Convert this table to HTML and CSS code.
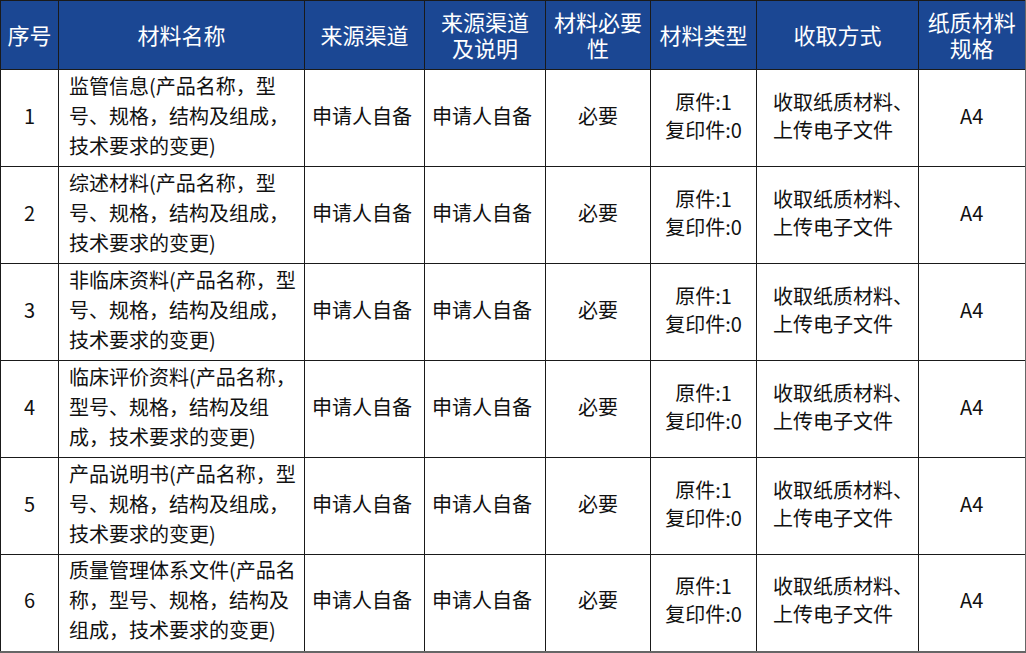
FILE: index.html
```html
<!DOCTYPE html>
<html lang="zh-CN">
<head>
<meta charset="utf-8">
<title>材料清单</title>
<link rel="stylesheet" href="styles.css">
</head>
<body>
<table class="materials">
  <colgroup>
    <col class="c-no"><col class="c-name"><col class="c-src"><col class="c-srcdesc"><col class="c-need"><col class="c-type"><col class="c-way"><col class="c-spec">
  </colgroup>
  <thead>
    <tr>
      <th>序号</th>
      <th>材料名称</th>
      <th>来源渠道</th>
      <th class="two">来源渠道<br>及说明</th>
      <th class="two">材料必要<br>性</th>
      <th>材料类型</th>
      <th>收取方式</th>
      <th class="two">纸质材料<br>规格</th>
    </tr>
  </thead>
  <tbody>
    <tr>
      <td class="no">1</td>
      <td class="name">监管信息(产品名称，型<br>号、规格，结构及组成，<br>技术要求的变更)</td>
      <td class="src">申请人自备</td>
      <td class="src">申请人自备</td>
      <td class="center">必要</td>
      <td class="center">原件:1<br>复印件:0</td>
      <td class="way">收取纸质材料、<br>上传电子文件</td>
      <td class="center">A4</td>
    </tr>
    <tr>
      <td class="no">2</td>
      <td class="name">综述材料(产品名称，型<br>号、规格，结构及组成，<br>技术要求的变更)</td>
      <td class="src">申请人自备</td>
      <td class="src">申请人自备</td>
      <td class="center">必要</td>
      <td class="center">原件:1<br>复印件:0</td>
      <td class="way">收取纸质材料、<br>上传电子文件</td>
      <td class="center">A4</td>
    </tr>
    <tr>
      <td class="no">3</td>
      <td class="name">非临床资料(产品名称，型<br>号、规格，结构及组成，<br>技术要求的变更)</td>
      <td class="src">申请人自备</td>
      <td class="src">申请人自备</td>
      <td class="center">必要</td>
      <td class="center">原件:1<br>复印件:0</td>
      <td class="way">收取纸质材料、<br>上传电子文件</td>
      <td class="center">A4</td>
    </tr>
    <tr>
      <td class="no">4</td>
      <td class="name">临床评价资料(产品名称，<br>型号、规格，结构及组<br>成，技术要求的变更)</td>
      <td class="src">申请人自备</td>
      <td class="src">申请人自备</td>
      <td class="center">必要</td>
      <td class="center">原件:1<br>复印件:0</td>
      <td class="way">收取纸质材料、<br>上传电子文件</td>
      <td class="center">A4</td>
    </tr>
    <tr>
      <td class="no">5</td>
      <td class="name">产品说明书(产品名称，型<br>号、规格，结构及组成，<br>技术要求的变更)</td>
      <td class="src">申请人自备</td>
      <td class="src">申请人自备</td>
      <td class="center">必要</td>
      <td class="center">原件:1<br>复印件:0</td>
      <td class="way">收取纸质材料、<br>上传电子文件</td>
      <td class="center">A4</td>
    </tr>
    <tr>
      <td class="no">6</td>
      <td class="name">质量管理体系文件(产品名<br>称，型号、规格，结构及<br>组成，技术要求的变更)</td>
      <td class="src">申请人自备</td>
      <td class="src">申请人自备</td>
      <td class="center">必要</td>
      <td class="center">原件:1<br>复印件:0</td>
      <td class="way">收取纸质材料、<br>上传电子文件</td>
      <td class="center">A4</td>
    </tr>
  </tbody>
</table>
</body>
</html>
```
FILE: styles.css
```css
html, body {
  margin: 0;
  padding: 0;
  background: #ffffff;
}

body {
  font-family: "Noto Sans CJK SC", "Noto Sans", sans-serif;
  color: #111111;
}

.materials {
  border-collapse: collapse;
  table-layout: fixed;
  width: 1025px;
}

.c-no { width: 58px; }
.c-name { width: 246px; }
.c-src { width: 120px; }
.c-srcdesc { width: 121px; }
.c-need { width: 105px; }
.c-type { width: 106px; }
.c-way { width: 162px; }
.c-spec { width: 107px; }

.materials th,
.materials td {
  border: 1px solid #1a1a1a;
  padding: 0;
  vertical-align: middle;
  white-space: nowrap;
  overflow: hidden;
}

.materials thead tr {
  height: 69px;
}

.materials th {
  background: #1b4793;
  color: #ffffff;
  font-weight: normal;
  font-size: 22px;
  line-height: 26px;
  text-align: center;
  padding-bottom: 3px;
}

.materials tbody tr {
  height: 97px;
}

.materials td {
  font-size: 20px;
  line-height: 28px;
  padding-bottom: 5px;
}

.materials td.no,
.materials td.center {
  text-align: center;
}

.materials td.name {
  text-align: left;
  padding-left: 10px;
  line-height: 30px;
}

.materials td.src {
  text-align: left;
  padding-left: 7px;
}

.materials td.way {
  text-align: left;
  padding-left: 16px;
}

.materials tbody tr:last-child td {
  border-bottom: 2px solid #666666;
}

.materials tr td:last-child,
.materials tr th:last-child {
  border-right: 2px solid #666666;
}
```
